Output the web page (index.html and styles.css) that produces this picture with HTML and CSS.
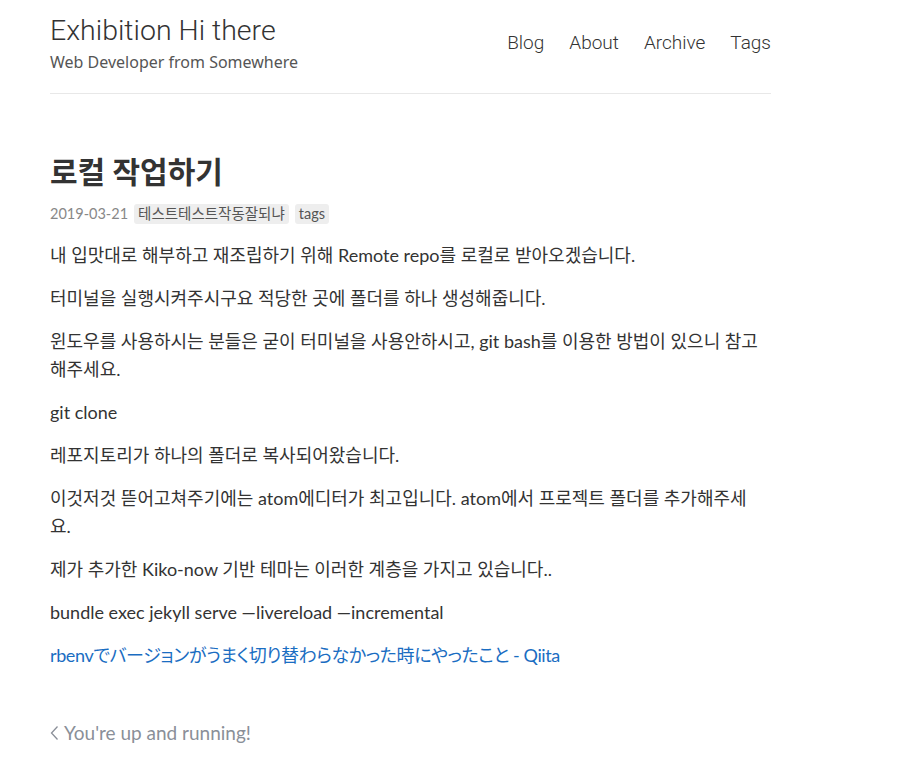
FILE: index.html
```html
<!DOCTYPE html>
<html lang="ko">
<head>
<meta charset="utf-8">
<title>로컬 작업하기</title>
<link rel="stylesheet" href="styles.css">
</head>
<body>
<div class="wrap">
  <header class="site-header">
    <div class="brand">
      <a class="site-title" href="#">Exhibition Hi there</a>
      <div class="site-sub">Web Developer from Somewhere</div>
    </div>
    <nav class="site-nav">
      <a href="#">Blog</a>
      <a href="#">About</a>
      <a href="#">Archive</a>
      <a href="#">Tags</a>
    </nav>
  </header>

  <article class="post">
    <h1 class="post-title">로컬 작업하기</h1>
    <div class="post-meta">
      <span class="date">2019-03-21</span>
      <span class="tag">테스트테스트작동잘되냐</span>
      <span class="tag">tags</span>
    </div>
    <div class="post-body">
      <p>내 입맛대로 해부하고 재조립하기 위해 Remote repo를 로컬로 받아오겠습니다.</p>
      <p>터미널을 실행시켜주시구요 적당한 곳에 폴더를 하나 생성해줍니다.</p>
      <p>윈도우를 사용하시는 분들은 굳이 터미널을 사용안하시고, git bash를 이용한 방법이 있으니 참고해주세요.</p>
      <p>git clone</p>
      <p>레포지토리가 하나의 폴더로 복사되어왔습니다.</p>
      <p>이것저것 뜯어고쳐주기에는 atom에디터가 최고입니다. atom에서 프로젝트 폴더를 추가해주세요.</p>
      <p>제가 추가한 Kiko-now 기반 테마는 이러한 계층을 가지고 있습니다..</p>
      <p>bundle exec jekyll serve —livereload —incremental</p>
      <p><a class="ja-link" lang="ja" href="#">rbenvでバージョンがうまく切り替わらなかった時にやったこと - Qiita</a></p>
    </div>
  </article>

  <nav class="pager">
    <a href="#"><svg class="chev" width="9" height="16" viewBox="0 0 9 16" aria-hidden="true"><path d="M7.5 1.5 L1.5 8 L7.5 14.5" fill="none" stroke="currentColor" stroke-width="1.3"/></svg><span>You're up and running!</span></a>
  </nav>
</div>
</body>
</html>
```
FILE: styles.css
```css
html, body {
  margin: 0;
  padding: 0;
  background: #fff;
}
body {
  font-family: Lato, "Noto Sans CJK KR", sans-serif;
  color: #333;
}
a {
  text-decoration: none;
}
.wrap {
  width: 721px;
  padding-left: 50px;
}
.site-header {
  display: flex;
  justify-content: space-between;
  align-items: flex-start;
  padding-top: 14px;
  padding-bottom: 19px;
  border-bottom: 1px solid #e8e8e8;
}
.site-title {
  display: block;
  font-family: Roboto, "Liberation Sans", sans-serif;
  font-weight: 300;
  font-size: 28.5px;
  line-height: 34px;
  color: #333;
}
.site-sub {
  font-family: "Noto Sans", Lato, sans-serif;
  font-size: 16px;
  line-height: 24px;
  color: #555;
  margin-top: 2px;
}
.site-nav {
  display: flex;
  gap: 25px;
  padding-top: 16px;
}
.site-nav a {
  font-family: Roboto, "Liberation Sans", sans-serif;
  font-weight: 300;
  font-size: 19px;
  line-height: 26px;
  color: #333;
}
.post {
  padding-top: 56px;
}
.post-title {
  margin: 0;
  font-size: 30px;
  line-height: 42px;
  font-weight: 700;
  color: #333;
}
.post-meta {
  display: flex;
  align-items: center;
  gap: 6px;
  margin-top: 12px;
  font-size: 14.5px;
  line-height: 20px;
  color: #888;
}
.tag {
  background: #eee;
  color: #555;
  border-radius: 3px;
  padding: 0 4px;
}
.post-body {
  margin-top: 17px;
  max-width: 714px;
  font-size: 18px;
  line-height: 28px;
}
.post-body p {
  margin: 0 0 15px;
}
.post-body a {
  color: #1a6dc2;
}
.ja-link {
  font-family: Lato, "Noto Sans CJK JP", sans-serif;
  font-feature-settings: "palt";
  letter-spacing: -0.4px;
}
.pager {
  margin-top: 50px;
  font-size: 19px;
  line-height: 28px;
}
.pager a {
  display: inline-flex;
  align-items: center;
  gap: 5px;
  color: #8a8f98;
}
.chev {
  display: block;
}
```
